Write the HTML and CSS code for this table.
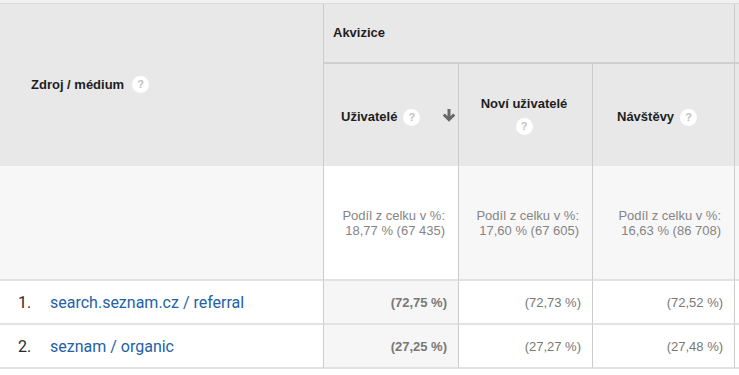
FILE: index.html
```html
<!DOCTYPE html>
<html lang="cs">
<head>
<meta charset="utf-8">
<title>Zdroj / médium</title>
<link rel="stylesheet" href="styles.css">
</head>
<body>
<div class="top-strip"></div>
<table class="report">
  <colgroup>
    <col class="c-dim">
    <col class="c-m1">
    <col class="c-m2">
    <col class="c-m3">
    <col class="c-more">
  </colgroup>
  <thead>
    <tr class="group-row">
      <th class="dim-head" rowspan="2"><span class="hd">Zdroj / médium</span><span class="help help-dim">?</span></th>
      <th class="group-head" colspan="3">Akvizice</th>
      <th class="group-head more"></th>
    </tr>
    <tr class="metric-row">
      <th class="metric m1">
        <div class="sortable">
          <span><span class="hd">Uživatelé</span><span class="help">?</span></span>
          <svg class="sort-arrow" viewBox="0 0 14 14" width="14" height="14"><path d="M7 1v10M1.8 6.5l5.2 5.2 5.2-5.2"/></svg>
        </div>
      </th>
      <th class="metric m2"><div class="hd">Noví uživatelé</div><span class="help help-below">?</span></th>
      <th class="metric m3"><span class="hd">Návštěvy</span><span class="help">?</span></th>
      <th class="metric more"></th>
    </tr>
  </thead>
  <tbody>
    <tr class="summary">
      <td class="s-dim"></td>
      <td class="s-val sorted">Podíl z celku v %:<br>18,77 % (67 435)</td>
      <td class="s-val">Podíl z celku v %:<br>17,60 % (67 605)</td>
      <td class="s-val">Podíl z celku v %:<br>16,63 % (86 708)</td>
      <td class="s-val more"></td>
    </tr>
    <tr class="data">
      <td class="d-dim"><span class="num">1.</span><a class="link" href="#">search.seznam.cz / referral</a></td>
      <td class="d-val sorted">(72,75 %)</td>
      <td class="d-val">(72,73 %)</td>
      <td class="d-val">(72,52 %)</td>
      <td class="d-val more"></td>
    </tr>
    <tr class="data">
      <td class="d-dim"><span class="num">2.</span><a class="link" href="#">seznam / organic</a></td>
      <td class="d-val sorted">(27,25 %)</td>
      <td class="d-val">(27,27 %)</td>
      <td class="d-val">(27,48 %)</td>
      <td class="d-val more"></td>
    </tr>
  </tbody>
</table>
</body>
</html>
```
FILE: styles.css
```css
* { box-sizing: border-box; }
html, body {
  margin: 0;
  padding: 0;
  background: #ffffff;
  overflow: hidden;
  font-family: "Liberation Sans", Arial, sans-serif;
  color: #1e1e1e;
}
.top-strip {
  height: 3px;
  background: #f1f1f1;
}
.report {
  border-collapse: separate;
  border-spacing: 0;
  table-layout: fixed;
  width: 935px;
  border-top: 1px solid #dcdcdc;
}
.c-dim { width: 324px; }
.c-m1 { width: 135px; }
.c-m2 { width: 134px; }
.c-m3 { width: 142px; }
.c-more { width: 200px; }

th {
  background: #e8e8e8;
  font-size: 13px;
  font-weight: bold;
  color: #1e1e1e;
  text-align: left;
  vertical-align: middle;
  padding: 0;
  border-right: 1px solid #cccccc;
}
.hd { line-height: 16px; }
.dim-head {
  height: 162px;
  padding-left: 31px;
}
.group-row th.group-head {
  height: 60px;
  padding-left: 9px;
  padding-bottom: 1px;
  border-bottom: 2px solid #cfcfcf;
}
.metric-row th { height: 102px; }
.m1 { padding: 5px 2px 0 17px; }
.sortable {
  display: flex;
  align-items: center;
  justify-content: space-between;
}
.sort-arrow {
  fill: none;
  stroke: #686868;
  stroke-width: 3;
  margin-top: -5px;
}
.m2 {
  text-align: center;
  padding: 0 24px 0 21px;
}
.m3 { padding: 5px 0 0 24px; }

.help {
  display: inline-block;
  width: 17px;
  height: 17px;
  border-radius: 50%;
  background: #ffffff;
  color: #c2c2c2;
  font-size: 11px;
  font-weight: bold;
  line-height: 17px;
  text-align: center;
  vertical-align: middle;
  margin-left: 6px;
  margin-top: -2px;
}
.help-dim { margin-left: 8px; }
.help-below {
  margin: 6px 0 0 0;
}

td {
  padding: 0;
  border-right: 1px solid #cccccc;
  border-bottom: 2px solid #e2e2e2;
  vertical-align: middle;
}
.summary td {
  height: 115px;
  background: #f7f7f7;
}
.summary td.sorted { background: #ffffff; }
.s-val {
  text-align: right;
  padding-right: 13px;
  font-size: 13px;
  line-height: 15px;
  color: #858585;
}
.data td {
  height: 44px;
  background: #ffffff;
}
.data td.sorted { background: #f6f6f6; }
.d-dim {
  padding-left: 18px;
  font-family: Roboto, "Liberation Sans", Arial, sans-serif;
  font-size: 16px;
}
.num {
  display: inline-block;
  width: 32px;
  color: #2a2a2a;
}
.link {
  color: #2461a6;
  text-decoration: none;
}
.d-val {
  text-align: right;
  padding-right: 11px;
  font-size: 13px;
  color: #787878;
}
.d-val.sorted { font-weight: bold; }
```
